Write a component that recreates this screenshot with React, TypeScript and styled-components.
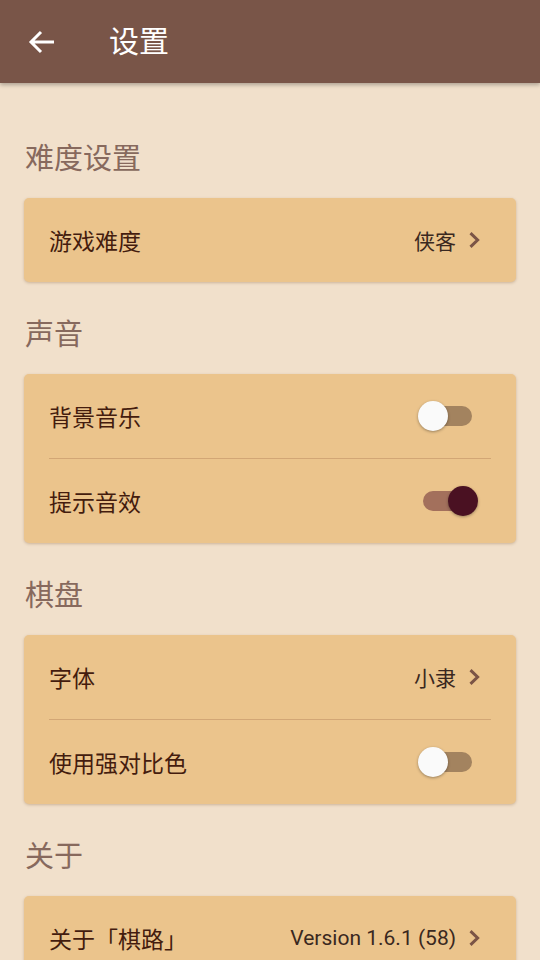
import React, { useState } from "react";
import styled, { createGlobalStyle } from "styled-components";

const Global = createGlobalStyle`
  html, body { margin: 0; padding: 0; background: #F1E0CB; }
  body { font-family: Roboto, "Noto Sans CJK SC", sans-serif; }
  * { box-sizing: border-box; }
`;

const Page = styled.div`
  width: 540px;
  min-height: 960px;
  background: #F1E0CB;
  display: flex;
  flex-direction: column;
`;

const AppBar = styled.header`
  height: 83px;
  background: #795548;
  display: flex;
  align-items: center;
  padding-left: 24px;
  box-shadow: 0 2px 4px rgba(0, 0, 0, 0.28);
  position: relative;
  z-index: 1;
`;

const BackButton = styled.button`
  width: 36px;
  height: 36px;
  border: none;
  background: transparent;
  padding: 0;
  display: flex;
  align-items: center;
  justify-content: center;
  margin-right: 49px;
`;

const Title = styled.h1`
  margin: 0;
  color: #ffffff;
  font-size: 30px;
  font-weight: 400;
  line-height: 40px;
`;

const Content = styled.main`
  display: flex;
  flex-direction: column;
  padding: 56px 24px 0;
`;

const SectionTitle = styled.h2<{ $first?: boolean }>`
  margin: ${(p) => (p.$first ? "0" : "33px")} 0 19px 1px;
  font-size: 29px;
  line-height: 40px;
  font-weight: 400;
  color: #87695D;
`;

const Card = styled.section`
  background: #EBC48C;
  border-radius: 5px;
  box-shadow: 0 1px 3px rgba(110, 70, 30, 0.28);
  display: flex;
  flex-direction: column;
`;

const Row = styled.div`
  height: 84px;
  display: flex;
  align-items: center;
  padding: 0 36px 0 25px;
`;

const Divider = styled.div`
  height: 1px;
  margin: 0 25px;
  background: #D2A675;
`;

const Label = styled.span`
  flex: 1;
  font-size: 23px;
  color: #441C0E;
`;

const Value = styled.span`
  font-size: 21px;
  color: #3A2820;
  margin-right: 12px;
`;

const SwitchTrack = styled.button<{ $on: boolean }>`
  position: relative;
  width: 49px;
  height: 20px;
  border-radius: 10px;
  border: none;
  padding: 0;
  margin-right: 8px;
  background: ${(p) => (p.$on ? "#A3705C" : "#A3835F")};
  cursor: pointer;
`;

const SwitchThumb = styled.span<{ $on: boolean }>`
  position: absolute;
  top: -5px;
  left: ${(p) => (p.$on ? "25px" : "-5px")};
  width: 30px;
  height: 30px;
  border-radius: 50%;
  background: ${(p) => (p.$on ? "#4A1122" : "#FAFAFA")};
  box-shadow: 0 1px 3px rgba(0, 0, 0, 0.35);
`;

const Chevron = () => (
  <svg width="12" height="16" viewBox="0 0 12 16">
    <path d="M2.5 1.2 L9.6 8 L2.5 14.8" fill="none" stroke="#7B5446" strokeWidth="3" />
  </svg>
);

const Switch = ({ initial }: { initial: boolean }) => {
  const [on, setOn] = useState(initial);
  return (
    <SwitchTrack $on={on} onClick={() => setOn(!on)}>
      <SwitchThumb $on={on} />
    </SwitchTrack>
  );
};

export default function App() {
  return (
    <Page>
      <Global />
      <AppBar>
        <BackButton>
          <svg width="36" height="36" viewBox="0 0 36 36">
            <path d="M30 18 H7 M17 8 L7 18 L17 28" fill="none" stroke="#ffffff" strokeWidth="3" />
          </svg>
        </BackButton>
        <Title>设置</Title>
      </AppBar>
      <Content>
        <SectionTitle $first>难度设置</SectionTitle>
        <Card>
          <Row>
            <Label>游戏难度</Label>
            <Value>侠客</Value>
            <Chevron />
          </Row>
        </Card>

        <SectionTitle>声音</SectionTitle>
        <Card>
          <Row>
            <Label>背景音乐</Label>
            <Switch initial={false} />
          </Row>
          <Divider />
          <Row>
            <Label>提示音效</Label>
            <Switch initial={true} />
          </Row>
        </Card>

        <SectionTitle>棋盘</SectionTitle>
        <Card>
          <Row>
            <Label>字体</Label>
            <Value>小隶</Value>
            <Chevron />
          </Row>
          <Divider />
          <Row>
            <Label>使用强对比色</Label>
            <Switch initial={false} />
          </Row>
        </Card>

        <SectionTitle>关于</SectionTitle>
        <Card>
          <Row>
            <Label>关于「棋路」</Label>
            <Value>Version 1.6.1 (58)</Value>
            <Chevron />
          </Row>
        </Card>
      </Content>
    </Page>
  );
}
